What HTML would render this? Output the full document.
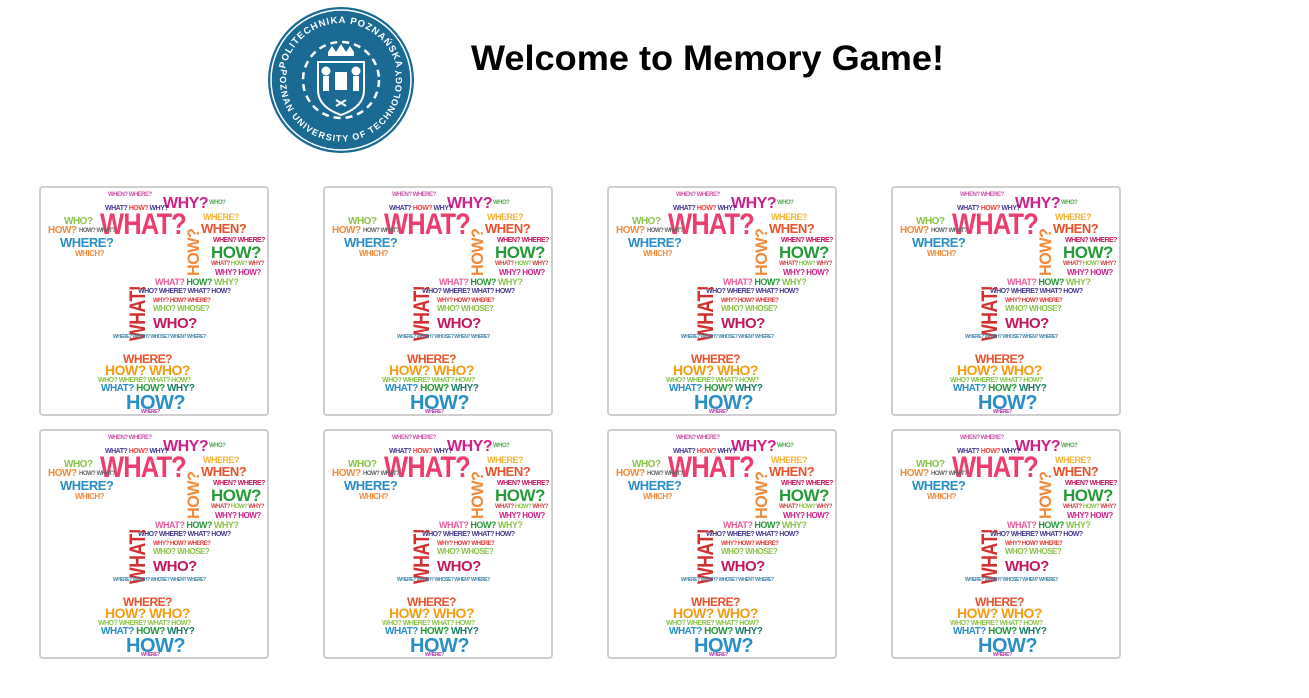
<!DOCTYPE html>
<html><head><meta charset="utf-8">
<style>
body{margin:0;background:#fff;width:1309px;height:698px;overflow:hidden;position:relative;font-family:"Liberation Sans",sans-serif}
.card{position:absolute;width:226px;height:226px;border:2px solid #cfcfcf;border-radius:4px;background:#fff;overflow:hidden}
.card span{position:absolute;font-weight:bold;white-space:nowrap;line-height:1;letter-spacing:-0.5px;transform-origin:0 0}
</style></head><body>
<svg style="position:absolute;left:266px;top:6px" width="150" height="150" viewBox="0 0 150 150">
<circle cx="75" cy="74" r="73" fill="#1b6a94"/>
<circle cx="75" cy="74" r="70" fill="none" stroke="#fff" stroke-width="1.5"/>
<defs>
<path id="top" d="M21.4,93.5 A57,57 0 1,1 128.6,93.5"/>
<path id="bot" d="M27.4,47 A55,55 0 1,0 122.6,47"/>
</defs>
<text font-family="Liberation Sans" font-size="9.5" fill="#fff" font-weight="bold" text-anchor="middle" letter-spacing="1"><textPath href="#top" startOffset="50%">POLITECHNIKA POZNAŃSKA</textPath></text>
<text font-family="Liberation Sans" font-size="9" fill="#fff" font-weight="bold" text-anchor="middle" dominant-baseline="hanging" letter-spacing="0.6"><textPath href="#bot" startOffset="50%">POZNAN UNIVERSITY OF TECHNOLOGY</textPath></text>
<circle cx="75" cy="74" r="38" fill="none" stroke="#fff" stroke-width="2.5" stroke-dasharray="7 5"/>
<path d="M52,56 h46 v28 q0,17 -23,25 q-23,-8 -23,-25z" fill="none" stroke="#fff" stroke-width="2"/>
<path d="M62,46 l4,-6 4,6 5,-8 5,8 4,-6 4,6 v4 h-26z" fill="#fff"/>
<rect x="69" y="66" width="12" height="18" fill="#fff"/>
<circle cx="60" cy="65" r="4.5" fill="#fff"/><circle cx="90" cy="65" r="4.5" fill="#fff"/>
<rect x="57" y="70" width="6" height="15" fill="#fff"/><rect x="87" y="70" width="6" height="15" fill="#fff"/>
<path d="M70,94 l10,6 M80,94 l-10,6" stroke="#fff" stroke-width="2"/>
</svg>
<svg style="position:absolute;left:469px;top:30px" width="480" height="50"><text x="2" y="40" font-family="Liberation Sans" font-weight="bold" font-size="35" textLength="473" lengthAdjust="spacingAndGlyphs">Welcome to Memory Game!</text></svg>

<div id="c0" class="card" style="left:39px;top:186px">
<span style="left:67px;top:4px;font-size:6px;color:#c5a">WHEN? WHERE?</span>
<span style="left:122px;top:8px;font-size:16px;color:#d0208a">WHY?</span>
<span style="left:168px;top:12px;font-size:6px;color:#5a5">WHO?</span>
<span style="left:64px;top:17px;font-size:7px;color:#443b8c">WHAT? <b style="color:#e44">HOW?</b> WHY?</span>
<span style="left:59px;top:22px;font-size:30px;color:#ee3d6d;transform:scaleX(0.85);letter-spacing:-1px">WHAT?</span>
<span style="left:162px;top:25px;font-size:9px;color:#f5b335">WHERE?</span>
<span style="left:23px;top:29px;font-size:10px;color:#8bc34a">WHO?</span>
<span style="left:160px;top:34px;font-size:13px;color:#e8522d">WHEN?</span>
<span style="left:7px;top:38px;font-size:10px;color:#f08a3c">HOW?</span>
<span style="left:38px;top:40px;font-size:6px;color:#666">HOW? WHAT?</span>
<span style="left:19px;top:48px;font-size:13px;color:#2b8fc7">WHERE?</span>
<span style="left:172px;top:49px;font-size:7px;color:#c2185b">WHEN? WHERE?</span>
<span style="left:144px;top:88px;font-size:17px;color:#f08a3c;transform:rotate(-90deg) scaleX(0.95)">HOW?</span>
<span style="left:170px;top:56px;font-size:17px;color:#279a3a">HOW?</span>
<span style="left:34px;top:62px;font-size:8px;color:#f08a3c">WHICH?</span>
<span style="left:170px;top:73px;font-size:6px;color:#c44">WHAT? <b style="color:#8bc34a">HOW?</b> WHY?</span>
<span style="left:174px;top:81px;font-size:8px;color:#d0208a">WHY? HOW?</span>
<span style="left:114px;top:90px;font-size:9px;color:#e85d9c">WHAT? <b style="color:#279a3a">HOW?</b> <b style="color:#8bc34a">WHY?</b></span>
<span style="left:97px;top:100px;font-size:7px;color:#443b8c">WHO? WHERE? WHAT? HOW?</span>
<span style="left:112px;top:110px;font-size:6px;color:#e53935">WHY? HOW? WHERE?</span>
<span style="left:112px;top:117px;font-size:8px;color:#8bc34a">WHO? WHOSE?</span>
<span style="left:86px;top:153px;font-size:22px;color:#d32f2f;transform:rotate(-90deg) scaleX(0.8)">WHAT!</span>
<span style="left:112px;top:128px;font-size:15px;color:#c2185b">WHO?</span>
<span style="left:72px;top:147px;font-size:5px;color:#48a">WHERE? WHICH? WHOSE? WHEN? WHERE?</span>
<span style="left:82px;top:165px;font-size:12px;color:#e8522d">WHERE?</span>
<span style="left:64px;top:175px;font-size:14px;color:#f39c12">HOW? WHO?</span>
<span style="left:57px;top:189px;font-size:7px;color:#8bc34a">WHO? WHERE? WHAT? HOW?</span>
<span style="left:60px;top:196px;font-size:10px;color:#2b8fc7">WHAT? <b style="color:#279a3a">HOW?</b> <b style="color:#1e7d6b">WHY?</b></span>
<span style="left:85px;top:205px;font-size:20px;color:#2b8fc7">HOW?</span>
<span style="left:100px;top:222px;font-size:5px;color:#a4a">WHERE?</span>
</div>
<script>
var c=document.getElementById('c0'),pos=[[323,186],[607,186],[891,186],[39,429],[323,429],[607,429],[891,429]];
pos.forEach(function(p){var n=c.cloneNode(true);n.removeAttribute('id');n.style.left=p[0]+'px';n.style.top=p[1]+'px';document.body.appendChild(n);});
</script>
</body></html>
